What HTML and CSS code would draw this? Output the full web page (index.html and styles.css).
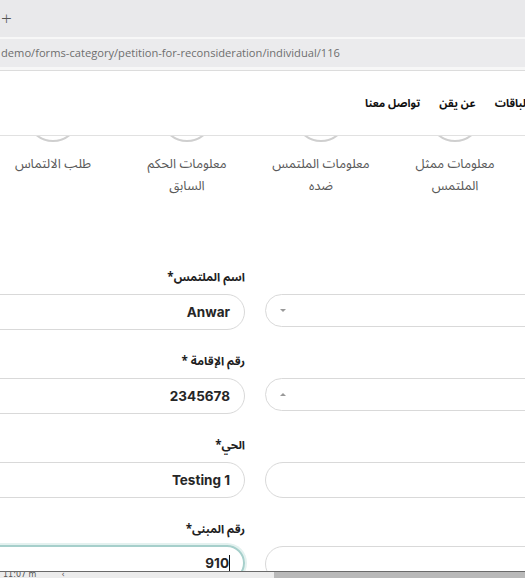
FILE: index.html
```html
<!DOCTYPE html>
<html lang="ar">
<head>
<meta charset="utf-8">
<title>طلب الالتماس</title>
<link rel="stylesheet" href="styles.css">
</head>
<body>
<div class="tabbar"><span class="newtab">+</span></div>
<div class="toolbar"><div class="address">demo/forms-category/petition-for-reconsideration/individual/116</div></div>

<header class="site-header">
  <nav class="nav">
    <a class="nav-link">الباقات</a>
    <a class="nav-link">عن يقن</a>
    <a class="nav-link">تواصل معنا</a>
  </nav>
</header>

<section class="steps">
  <div class="step">
    <div class="circle-clip"><div class="circle"></div></div>
    <div class="step-label"><span class="line">معلومات ممثل</span><span class="line">الملتمس</span></div>
  </div>
  <div class="step">
    <div class="circle-clip"><div class="circle"></div></div>
    <div class="step-label"><span class="line">معلومات الملتمس</span><span class="line">ضده</span></div>
  </div>
  <div class="step">
    <div class="circle-clip"><div class="circle"></div></div>
    <div class="step-label"><span class="line">معلومات الحكم</span><span class="line">السابق</span></div>
  </div>
  <div class="step">
    <div class="circle-clip"><div class="circle"></div></div>
    <div class="step-label"><span class="line">طلب الالتماس</span></div>
  </div>
</section>

<form class="form">
  <div class="cell">
    <div class="lbl"></div>
    <div class="box select"><span class="caret down"></span></div>
  </div>
  <div class="cell">
    <div class="lbl">اسم الملتمس*</div>
    <div class="box">Anwar</div>
  </div>

  <div class="cell">
    <div class="lbl"></div>
    <div class="box select"><span class="caret up"></span></div>
  </div>
  <div class="cell">
    <div class="lbl">رقم الإقامة *</div>
    <div class="box">2345678</div>
  </div>

  <div class="cell">
    <div class="lbl"></div>
    <div class="box"></div>
  </div>
  <div class="cell">
    <div class="lbl">الحي*</div>
    <div class="box">Testing 1</div>
  </div>

  <div class="cell">
    <div class="lbl"></div>
    <div class="box"></div>
  </div>
  <div class="cell">
    <div class="lbl">رقم المبنى*</div>
    <div class="box focused"><span class="cursor"></span><span class="val">910</span></div>
  </div>
</form>

<div class="taskbar">
  <span class="tb-time">11:07 m</span><span class="tb-arrow">&lsaquo;</span>
</div>
</body>
</html>
```

FILE: styles.css
```css
html, body {
  margin: 0;
  padding: 0;
}
body {
  width: 525px;
  height: 578px;
  overflow: hidden;
  background: #ffffff;
  font-family: "Noto Sans Arabic", "Noto Kufi Arabic", "Noto Naskh Arabic", "DejaVu Sans", sans-serif;
  color: #222;
}

.tabbar {
  height: 37px;
  background: #e9e9eb;
  display: flex;
  align-items: center;
}
.newtab {
  font-family: "Open Sans", sans-serif;
  font-weight: 300;
  font-size: 19px;
  color: #555;
  margin-left: 1px;
  line-height: 1;
  margin-top: -1px;
}

.toolbar {
  height: 34px;
  background: #f7f7f7;
  border-bottom: 1px solid #dcdcdc;
  padding-top: 2px;
  box-sizing: border-box;
}
.address {
  height: 28px;
  background: #ebebed;
  font-family: "Open Sans", sans-serif;
  font-size: 11.15px;
  color: #6e6e6e;
  line-height: 27px;
  padding-left: 1px;
  white-space: nowrap;
}

.site-header {
  height: 64px;
  border-bottom: 1px solid #e1e1e1;
  display: flex;
  align-items: center;
  justify-content: flex-end;
  position: relative;
  z-index: 2;
  background: #fff;
}
.nav {
  display: flex;
  direction: rtl;
  gap: 19px;
  margin-right: -4px;
  margin-top: 0;
}
.nav-link {
  font-weight: bold;
  font-size: 11px;
  color: #111;
  white-space: nowrap;
}

.steps {
  display: flex;
  direction: rtl;
  width: 536px;
  margin-left: -14px;
}
.step {
  width: 134px;
  flex: none;
  text-align: center;
}
.circle-clip {
  height: 6px;
  overflow: hidden;
}
.circle {
  width: 54px;
  height: 54px;
  box-sizing: border-box;
  border: 2px solid #cfcfcf;
  border-radius: 50%;
  margin: -48px auto 0;
}
.step-label {
  margin-top: 11px;
  font-size: 13px;
  color: #595959;
}
.line {
  display: block;
  height: 22px;
  line-height: 22px;
}

.form {
  display: grid;
  direction: rtl;
  grid-template-columns: 300px 300px;
  column-gap: 20px;
  row-gap: 22px;
  width: 620px;
  margin-left: -55px;
  margin-top: 71px;
}
.cell {
  display: flex;
  flex-direction: column;
}
.lbl {
  height: 20px;
  line-height: 20px;
  margin-bottom: 6px;
  font-weight: bold;
  font-size: 11.6px;
  color: #1e1e1e;
  white-space: nowrap;
}
.box {
  height: 36px;
  box-sizing: border-box;
  border: 1px solid #d9d9d9;
  border-radius: 18px;
  padding: 0 14px;
  display: flex;
  align-items: center;
  font-family: "Inter", "Lato", sans-serif;
  font-weight: 700;
  font-size: 13.5px;
  color: #262626;
}
.select {
  justify-content: flex-end;
}
.box.select {
  height: 33px;
  border-radius: 17px;
}
.caret {
  width: 0;
  height: 0;
  border-left: 3px solid transparent;
  border-right: 3px solid transparent;
}
.caret.down {
  border-top: 3px solid #999;
}
.caret.up {
  border-bottom: 3px solid #999;
}
.box.focused {
  border: 2px solid #a6cfcb;
  box-shadow: 0 0 0 2px #e3f1ef;
  padding-right: 12px;
  margin-top: -1px;
}
.cursor {
  display: inline-block;
  width: 1px;
  height: 17px;
  background: #111;
  margin-right: 1px;
}

.taskbar {
  position: fixed;
  left: 0;
  right: 0;
  bottom: 0;
  height: 6px;
  border-top: 1px solid #6a6a6a;
  background: linear-gradient(to right, #ececec 0, #ececec 274px, #b9b9b9 274px);
  font-family: "DejaVu Sans", sans-serif;
  font-size: 8px;
  line-height: 6px;
  color: #555;
  overflow: hidden;
  display: flex;
  gap: 25px;
  z-index: 5;
}
.tb-time {
  margin-left: 3px;
}
```
